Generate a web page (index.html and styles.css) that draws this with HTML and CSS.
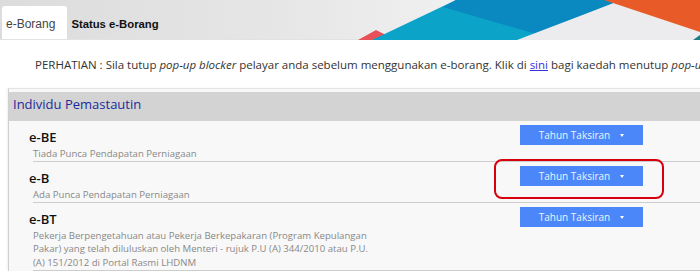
FILE: index.html
```html
<!DOCTYPE html>
<html lang="ms">
<head>
    <meta charset="UTF-8">
    <meta name="viewport" content="width=device-width, initial-scale=1.0">
    <title>e-Borang</title>
    <link rel="stylesheet" href="styles.css">
</head>
<body>
    <header class="topbar">
        <nav class="tabs">
            <a class="tab active" href="#">e-Borang</a>
            <a class="tab" href="#">Status e-Borang</a>
        </nav>
        <svg class="banner" viewBox="350 0 350 40" width="350" height="40" preserveAspectRatio="none">
            <polygon points="358,40 376,30 396,40" fill="#e9515a"/>
            <polygon points="372,40 456,0 610,0 522,40" fill="#0ca3c9"/>
            <polygon points="456,0 607,0 614,3 536,34 443,7" fill="#0a88c0"/>
            <polygon points="517,40 614,3 700,34 700,40" fill="#ececee"/>
            <polygon points="604,0 700,0 700,32" fill="#e85a27"/>
            <polygon points="693,40 700,35 700,40" fill="#1f7d86"/>
        </svg>
    </header>

    <main class="content">
        <p class="notice">
            PERHATIAN : Sila tutup <em>pop-up blocker</em> pelayar anda sebelum menggunakan e-borang. Klik di <a href="#">sini</a> bagi kaedah menutup <em>pop-up blocker</em>.
        </p>

        <section class="panel">
            <h2 class="panel-title">Individu Pemastautin</h2>
            <ul class="form-list">
                <li class="form-row">
                    <div class="form-info">
                        <h3>e-BE</h3>
                        <p>Tiada Punca Pendapatan Perniagaan</p>
                    </div>
                    <div class="form-action">
                        <button class="btn-year">Tahun Taksiran <span class="caret"></span></button>
                    </div>
                </li>
                <li class="form-row">
                    <div class="form-info">
                        <h3>e-B</h3>
                        <p>Ada Punca Pendapatan Perniagaan</p>
                    </div>
                    <div class="form-action highlight">
                        <button class="btn-year">Tahun Taksiran <span class="caret"></span></button>
                    </div>
                </li>
                <li class="form-row">
                    <div class="form-info">
                        <h3>e-BT</h3>
                        <p class="wrap">Pekerja Berpengetahuan atau Pekerja Berkepakaran (Program Kepulangan Pakar) yang telah diluluskan oleh Menteri - rujuk P.U (A) 344/2010 atau P.U. (A) 151/2012 di Portal Rasmi LHDNM</p>
                    </div>
                    <div class="form-action">
                        <button class="btn-year">Tahun Taksiran <span class="caret"></span></button>
                    </div>
                </li>
            </ul>
        </section>
    </main>
</body>
</html>
```

FILE: styles.css
```css
html,
body {
    overflow: hidden;
}

body {
    margin: 0;
    font-family: "Open Sans", Arial, sans-serif;
    background: #fff;
    color: #333;
}

.topbar {
    display: flex;
    height: 40px;
    background: linear-gradient(to right, #dcdcdc, #e6e6e6 40%, #f0f0f0 65%, #ececec);
    border-bottom: 1px solid #e2e2e2;
    box-sizing: border-box;
}

.tabs {
    display: flex;
    align-items: flex-end;
    padding-left: 2px;
}

.tab {
    display: block;
    height: 33px;
    line-height: 36px;
    padding: 0 12px 0 4px;
    font-family: "Liberation Sans", Arial, sans-serif;
    font-size: 11.3px;
    font-weight: bold;
    color: #111;
    text-decoration: none;
}

.tab.active {
    background: #fff;
    border-radius: 3px 3px 0 0;
    font-size: 12px;
    font-weight: normal;
    color: #444;
}

.banner {
    margin-left: auto;
    flex: none;
}

.notice {
    margin: 17px 0 15px;
    padding-left: 35px;
    font-size: 11.5px;
    line-height: 16px;
    white-space: nowrap;
    color: #333;
}

.notice a {
    color: #3333dd;
}

.panel {
    width: 800px;
    margin-left: 8px;
    padding-top: 3px;
    background: #f8f8f8;
    border-top: 1px solid #e4e4e4;
    border-left: 1px solid #cfcfcf;
    box-shadow: -1px 0 2px rgba(0, 0, 0, 0.06);
}

.panel-title {
    margin: 0;
    padding: 3px 4px 8px;
    background: #d3d3d3;
    font-size: 13px;
    font-weight: normal;
    line-height: 18px;
    color: #1c2a9c;
}

.form-list {
    list-style: none;
    margin: 0;
    padding: 0;
}

.form-row {
    display: flex;
    align-items: flex-start;
    margin-left: 24px;
    border-bottom: 1px solid #cdcdcd;
}

.form-info {
    width: 487px;
    flex: none;
    padding: 8px 0 1px;
}

.form-info h3 {
    margin: 0 0 2px -4px;
    font-size: 13px;
    font-weight: 600;
    line-height: 16px;
    color: #111;
}

.form-info p {
    margin: 0;
    font-size: 9.6px;
    line-height: 13px;
    color: #888;
}

.form-info p.wrap {
    width: 345px;
    line-height: 13.3px;
}

.form-action {
    padding-top: 4px;
}

.btn-year {
    display: flex;
    align-items: center;
    justify-content: center;
    gap: 10px;
    width: 123px;
    height: 20px;
    padding: 0;
    border: none;
    background: #4b87f8;
    color: #eef3ff;
    font-family: "Open Sans", Arial, sans-serif;
    font-size: 10px;
}

.caret {
    width: 0;
    height: 0;
    border-left: 2.5px solid transparent;
    border-right: 2.5px solid transparent;
    border-top: 3px solid #fff;
}

.highlight {
    position: relative;
}

.highlight::after {
    content: '';
    position: absolute;
    left: -26px;
    right: -21px;
    top: -3px;
    bottom: -13px;
    border: 2.5px solid #d8000f;
    border-radius: 8px;
}
```
